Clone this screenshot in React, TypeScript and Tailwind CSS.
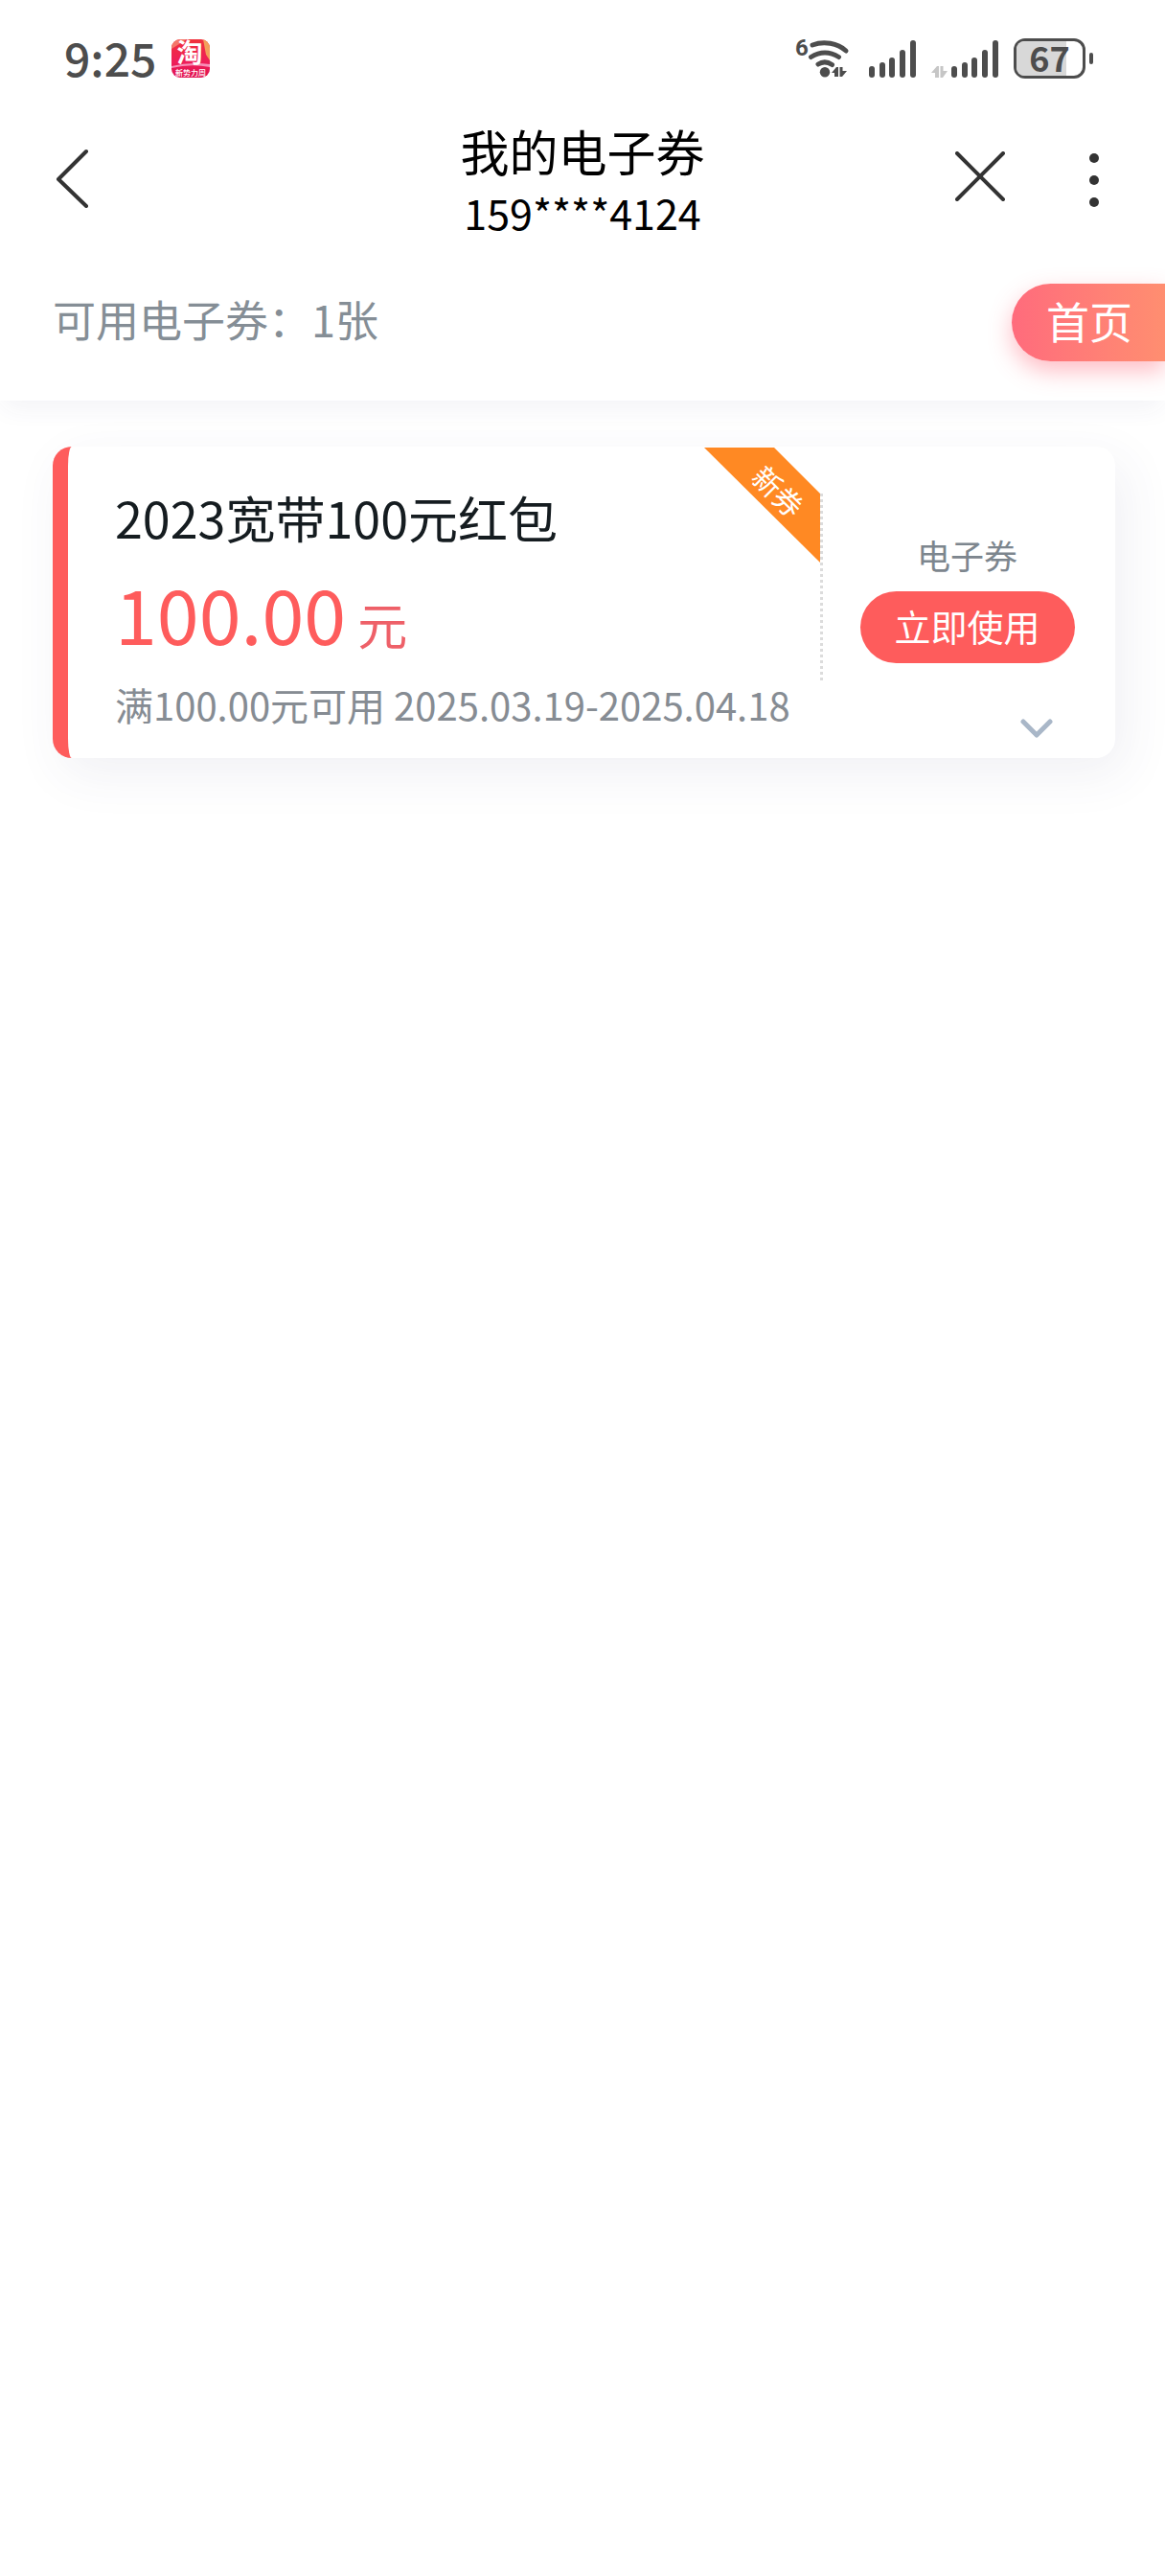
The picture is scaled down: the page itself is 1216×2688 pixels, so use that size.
import type { ReactNode } from "react";

const coupons = [
  {
    title: "2023宽带100元红包",
    amount: "100.00",
    unit: "元",
    rule: "满100.00元可用 2025.03.19-2025.04.18",
    kind: "电子券",
    tag: "新券",
  },
];

function TaobaoIcon() {
  return (
    <svg viewBox="0 0 40 40" className="size-10 overflow-visible" aria-hidden="true">
      <defs>
        <linearGradient id="tb" x1="0" y1="0" x2="0" y2="1">
          <stop offset="0" stopColor="#f0323c" />
          <stop offset="0.6" stopColor="#ee1f5a" />
          <stop offset="1" stopColor="#e0104f" />
        </linearGradient>
        <clipPath id="tbClip">
          <rect width="40" height="40" rx="9" />
        </clipPath>
      </defs>
      <g clipPath="url(#tbClip)">
        <rect width="40" height="40" fill="url(#tb)" />
        <path d="M0 0h16L0 10z" fill="#f4776a" />
        <path d="M33 0h7v22l-4-6z" fill="#f2a05a" />
        <path d="M0 28q20-5 40-2v3q-20-4-40 1z" fill="#f78fb8" />
      </g>
      <text x="19" y="24" textAnchor="middle" fontSize="27" fontWeight="700" fill="#fff">
        淘
      </text>
      <text x="20" y="38" textAnchor="middle" fontSize="8" fontWeight="500" fill="#fff">
        新势力周
      </text>
    </svg>
  );
}

function WifiIcon() {
  return (
    <svg viewBox="0 0 56 42" className="h-[42px] w-14 overflow-visible" fill="none" stroke="#4d4d4d" aria-hidden="true">
      <text x="-1" y="18" fontSize="24" fontWeight="700" fill="#4d4d4d" stroke="none" fontFamily="Roboto, sans-serif">
        6
      </text>
      <g strokeWidth="5" strokeLinecap="round">
        <path d="M17 7C29 2.500 43 5 52 13" />
        <path d="M15.500 19.500Q30 10.500 44.500 19.500" />
        <path d="M23 27Q30 22.500 37.500 27.500" />
      </g>
      <circle cx="30" cy="35.300" r="5.200" fill="#4d4d4d" stroke="none" />
      <path d="M37 36l5-6h2v10h-4v-4zM45.500 30h3v4H53l-5 6h-2.500z" fill="#4d4d4d" stroke="none" />
    </svg>
  );
}

const bars = [
  { x: 0, h: 12 },
  { x: 11, h: 16 },
  { x: 21, h: 21 },
  { x: 32, h: 29 },
  { x: 43, h: 39 },
];

function SignalIcon() {
  return (
    <svg viewBox="0 0 49 40" className="h-10 w-[49px]" fill="#4d4d4d" aria-hidden="true">
      {bars.map((bar) => (
        <rect key={bar.x} x={bar.x} y={40 - bar.h} width="6" height={bar.h} rx="3" />
      ))}
    </svg>
  );
}

function DataArrows() {
  return (
    <svg viewBox="0 0 17 12" className="h-3 w-[17px]" fill="#c6c6c6" aria-hidden="true">
      <path d="M0 7l6-7h2v12H4V7zM9.500 0h3v5H17l-5 7H9.500z" />
    </svg>
  );
}

function Battery() {
  return (
    <div className="flex items-center gap-1">
      <div className="relative flex h-[42px] w-[75px] items-center justify-center rounded-xl border-3 border-[#4d4d4d]">
        <div className="absolute inset-y-0 left-0 w-3/4 rounded-l-lg bg-[#d8d8d8]" />
        <span className="relative pb-1 text-4xl font-bold text-[#4d4d4d]">67</span>
      </div>
      <div className="h-3 w-1 rounded-full bg-[#4d4d4d]" />
    </div>
  );
}

function StatusBar() {
  return (
    <div className="flex h-[122px] items-center justify-between pr-[75px] pl-[67px]">
      <div className="flex items-center gap-4">
        <span className="pb-1 text-5xl font-medium text-[#4d4d4d]">9:25</span>
        <TaobaoIcon />
      </div>
      <div className="flex items-center">
        <WifiIcon />
        <div className="ml-5">
          <SignalIcon />
        </div>
        <div className="ml-4 flex items-end gap-1">
          <DataArrows />
          <SignalIcon />
        </div>
        <div className="ml-4">
          <Battery />
        </div>
      </div>
    </div>
  );
}

function IconButton({ label, children }: { label: string; children: ReactNode }) {
  return (
    <button type="button" aria-label={label} className="flex h-[62px] items-center">
      {children}
    </button>
  );
}

function NavBar() {
  return (
    <header className="grid grid-cols-[1fr_auto_1fr] items-center px-[57px]">
      <IconButton label="返回">
        <svg viewBox="0 0 36 62" className="h-[62px] w-9" fill="none" stroke="#333" strokeWidth="4" strokeLinecap="round" strokeLinejoin="round">
          <path d="M33 3L4 32l29 28" />
        </svg>
      </IconButton>
      <div className="text-center text-black">
        <h1 className="text-[51px] leading-[70px]">我的电子券</h1>
        <p className="text-[43px] leading-[58px]">159****4124</p>
      </div>
      <div className="flex items-center justify-end gap-[88px] pr-3">
        <IconButton label="关闭">
          <svg viewBox="0 0 52 52" className="mb-1 size-[52px]" stroke="#333" strokeWidth="4" strokeLinecap="round">
            <path d="M2 2l48 48M50 2L2 50" />
          </svg>
        </IconButton>
        <IconButton label="更多">
          <svg viewBox="0 0 10 56" className="mt-1 h-14 w-[10px]" fill="#333">
            <circle cx="5" cy="5" r="5" />
            <circle cx="5" cy="28" r="5" />
            <circle cx="5" cy="51" r="5" />
          </svg>
        </IconButton>
      </div>
    </header>
  );
}

function Coupon({ coupon }: { coupon: (typeof coupons)[number] }) {
  return (
    <article className="flex rounded-[20px] border-l-16 border-[#fe5c5c] bg-white shadow-[10px_16px_52px_rgba(60,60,110,0.08)]">
      <div className="relative flex-1 pt-[38px] pb-[30px] pl-[49px]">
        <h2 className="text-[52px] leading-[72px] text-[#151c20]">{coupon.title}</h2>
        <p className="mb-2 flex items-baseline gap-3 text-[#fe5c5c]">
          <span className="text-[79px] leading-[126px]">{coupon.amount}</span>
          <span className="text-[52px] leading-none text-[#ee6068]">{coupon.unit}</span>
        </p>
        <p className="text-[40px] leading-[51px] text-[#868c93]">{coupon.rule}</p>
        <div className="absolute top-0 right-0 size-[121px]">
          <svg viewBox="0 0 121 121" className="size-full" fill="#ff8923" aria-hidden="true">
            <path d="M0 1h73l48 48v72z" />
          </svg>
          <span className="absolute top-7 left-12 rotate-45 text-[30px] leading-9 whitespace-nowrap text-white">
            {coupon.tag}
          </span>
        </div>
      </div>
      <div className="mt-[49px] h-[195px] border-l-3 border-dotted border-[#dcdcdc]" />
      <div className="flex w-[305px] flex-col items-center pt-[88px] pr-1">
        <span className="text-[35px] leading-[50px] text-[#7d868e]">{coupon.kind}</span>
        <button type="button" className="mt-[13px] h-[75px] w-56 rounded-full bg-[#fe5c5c] pb-1 text-[38px] leading-none text-white">
          立即使用
        </button>
        <button type="button" aria-label="展开详情" className="mt-[57px] mr-[61px] self-end">
          <svg viewBox="0 0 34 22" className="h-[22px] w-[34px]" fill="none" stroke="#a9b7c8" strokeWidth="5" strokeLinecap="round" strokeLinejoin="round">
            <path d="M3 4l14 14L31 4" />
          </svg>
        </button>
      </div>
    </article>
  );
}

export default function App() {
  return (
    <div className="min-h-screen bg-white font-['Noto_Sans_CJK_SC',sans-serif]">
      <div className="bg-white shadow-[0_10px_26px_-4px_rgba(60,60,110,0.07)]">
        <StatusBar />
        <NavBar />
        <div className="flex items-start justify-between pt-[46px] pb-[41px] pl-[55px]">
          <p className="text-[45px] leading-[74px] text-[#858e96]">可用电子券：1张</p>
          <a
            href="#home"
            className="rounded-l-full bg-linear-to-r from-[#ff6b7c] to-[#ff8e70] pr-[34px] pb-1 pl-[36px] text-[45px] leading-[77px] text-white shadow-[0_10px_24px_rgba(255,107,124,0.45)]"
          >
            首页
          </a>
        </div>
      </div>
      <main className="pt-12 pr-[52px] pl-[55px]">
        {coupons.map((coupon) => (
          <Coupon key={coupon.title} coupon={coupon} />
        ))}
      </main>
    </div>
  );
}
